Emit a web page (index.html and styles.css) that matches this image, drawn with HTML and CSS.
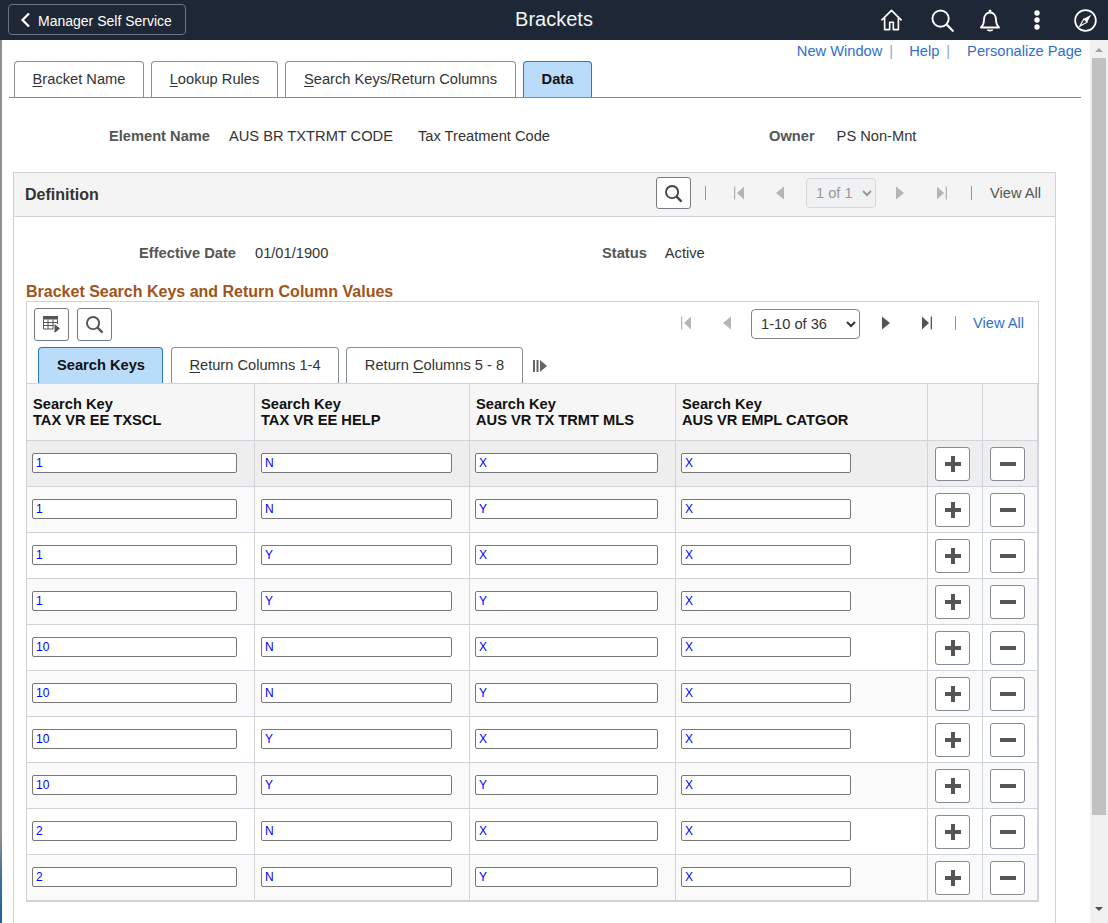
FILE: index.html
```html
<!DOCTYPE html>
<html lang="en">
<head>
<meta charset="utf-8">
<title>Brackets</title>
<link rel="stylesheet" href="styles.css">
</head>
<body>
<svg class="defs" width="0" height="0" aria-hidden="true">
  <defs>
    <symbol id="i-first" viewBox="0 0 12 16"><rect x="1" y="1.500" width="1.300" height="13"/><path d="M11 1.500v13L4 8z"/></symbol>
    <symbol id="i-prev" viewBox="0 0 10 16"><path d="M9 1.500v13L1 8z"/></symbol>
    <symbol id="i-next" viewBox="0 0 10 16"><path d="M1 1.500v13L9 8z"/></symbol>
    <symbol id="i-last" viewBox="0 0 12 16"><path d="M1 1.500v13L8 8z"/><rect x="9.700" y="1.500" width="1.300" height="13"/></symbol>
    <symbol id="i-search" viewBox="0 0 20 20"><circle cx="8.500" cy="8.500" r="6.400" fill="none" stroke="currentColor" stroke-width="2"/><path d="M13 13l5.500 5.500" stroke="currentColor" stroke-width="2.400" fill="none"/></symbol>
    <symbol id="i-plus" viewBox="0 0 16 16"><path d="M6 0h4v6h6v4h-6v6H6v-6H0V6h6z"/></symbol>
    <symbol id="i-minus" viewBox="0 0 16 4"><rect width="16" height="4"/></symbol>
  </defs>
</svg>
<header class="topbar">
  <button class="back" type="button">
    <svg class="back-icon" viewBox="0 0 10 16"><path d="M8.500 1.500L2 8l6.500 6.500" fill="none" stroke="#fff" stroke-width="2.200"/></svg>
    <span>Manager Self Service</span>
  </button>
  <h1 class="title">Brackets</h1>
  <nav class="top-icons">
    <svg class="ti ti-home" viewBox="0 0 24 24"><path d="M1 12.500L12 1.500l11 11M4.500 9.500V22.500h5.500v-8h4v8h5.500V9.500" fill="none" stroke="#fff" stroke-width="1.800" stroke-linejoin="round"/></svg>
    <svg class="ti ti-search" viewBox="0 0 24 24"><circle cx="10" cy="10" r="8.500" fill="none" stroke="#fff" stroke-width="2"/><path d="M16 16l7.500 7.500" stroke="#fff" stroke-width="2.200"/></svg>
    <svg class="ti ti-bell" viewBox="0 0 20 23"><path d="M1 18.500c2-2 3-3.500 3-7.500C4 6.500 6.500 3.500 10 3.500s6 3 6 7.500c0 4 1 5.500 3 7.500z" fill="none" stroke="#fff" stroke-width="1.800" stroke-linejoin="round"/><circle cx="10" cy="2" r="1.500" fill="#fff"/><path d="M7.500 20.500c.5 1.500 4.500 1.500 5 0" fill="none" stroke="#fff" stroke-width="1.800"/></svg>
    <svg class="ti ti-dots" viewBox="0 0 6 20"><circle cx="3" cy="3" r="2.700" fill="#fff"/><circle cx="3" cy="10" r="2.700" fill="#fff"/><circle cx="3" cy="17" r="2.700" fill="#fff"/></svg>
    <svg class="ti ti-compass" viewBox="0 0 24 24"><circle cx="12" cy="12" r="10.800" fill="none" stroke="#fff" stroke-width="1.800"/><path d="M18 6L13.700 13.700 10.300 10.300z" fill="#fff"/><path d="M6 18l4.300-7.700 3.400 3.400z" fill="none" stroke="#fff" stroke-width="1.200"/></svg>
  </nav>
</header>
<div class="shell">
  <div class="edge"></div>
  <main class="page">
    <div class="links">
      <a>New Window</a><span class="sep sep-a">|</span>
      <a>Help</a><span class="sep sep-b">|</span>
      <a>Personalize Page</a>
    </div>
    <div class="page-tabs">
      <div class="tab page-tab w1"><span><u>B</u>racket Name</span></div>
      <div class="tab page-tab w2"><span><u>L</u>ookup Rules</span></div>
      <div class="tab page-tab w3"><span><u>S</u>earch Keys/Return Columns</span></div>
      <div class="tab page-tab w4 active"><span>Data</span></div>
    </div>
    <div class="element-row">
      <span class="label l-element">Element Name</span>
      <span class="v-code">AUS BR TXTRMT CODE</span>
      <span class="v-desc">Tax Treatment Code</span>
      <span class="label">Owner</span>
      <span class="v-owner">PS Non-Mnt</span>
    </div>
    <section class="panel">
      <div class="panel-head">
        <h2 class="panel-title">Definition</h2>
        <button class="icon-btn hd-search" type="button"><svg class="ic-search"><use href="#i-search"/></svg></button>
        <span class="bar orange"></span>
        <svg class="nav dim n-first"><use href="#i-first"/></svg>
        <svg class="nav-s dim n-prev"><use href="#i-prev"/></svg>
        <select class="sel sel-off" disabled><option>1 of 1</option></select>
        <svg class="nav-s dim n-next"><use href="#i-next"/></svg>
        <svg class="nav dim n-last"><use href="#i-last"/></svg>
        <span class="bar blue-bar"></span>
        <span class="viewall-plain">View All</span>
      </div>
      <div class="date-row">
        <span class="label l-date">Effective Date</span>
        <span class="v-date">01/01/1900</span>
        <span class="label">Status</span>
        <span class="v-status">Active</span>
      </div>
      <h3 class="sub-title">Bracket Search Keys and Return Column Values</h3>
      <div class="grid-box">
        <div class="grid-tools">
          <button class="icon-btn tool" type="button">
            <svg class="ic-table" viewBox="0 0 17 17"><path d="M0 0h15v3.500H0z" fill="#555"/><path d="M.5 3.500v9.500H10M14.500 3.500V8M.5 6.500h14M.5 9.500h10M5 3.500V13M10 3.500V13" fill="none" stroke="#555"/><path d="M11.500 8l5.500 4.500-5.500 4.500z" fill="#555"/></svg>
          </button>
          <button class="icon-btn tool tool-search" type="button"><svg class="ic-search"><use href="#i-search"/></svg></button>
          <svg class="nav dim g-first"><use href="#i-first"/></svg>
          <svg class="nav-s dim g-prev"><use href="#i-prev"/></svg>
          <select class="sel sel-on"><option>1-10 of 36</option></select>
          <svg class="nav-s on g-next"><use href="#i-next"/></svg>
          <svg class="nav on g-last"><use href="#i-last"/></svg>
          <span class="bar orange g-bar"></span>
          <a class="viewall">View All</a>
        </div>
        <div class="grid-tabs">
          <div class="tab grid-tab t1 active"><span>Search Keys</span></div>
          <div class="tab grid-tab t2"><span><u>R</u>eturn Columns 1-4</span></div>
          <div class="tab grid-tab t3"><span>Return <u>C</u>olumns 5 - 8</span></div>
          <svg class="show-all" viewBox="0 0 14 12"><rect x="0" y="0" width="2" height="12"/><rect x="3.500" y="0" width="2" height="12"/><path d="M7 0l7 6-7 6z"/></svg>
        </div>
        <table class="grid">
          <colgroup><col class="c1"><col class="c2"><col class="c3"><col class="c4"><col class="c5"><col class="c6"></colgroup>
          <thead>
            <tr>
              <th>Search Key<br>TAX VR EE TXSCL</th>
              <th>Search Key<br>TAX VR EE HELP</th>
              <th>Search Key<br>AUS VR TX TRMT MLS</th>
              <th>Search Key<br>AUS VR EMPL CATGOR</th>
              <th></th><th></th>
            </tr>
          </thead>
          <tbody id="rows">
            <tr class="hover"><td><input class="in in1" value="1"></td><td><input class="in in2" value="N"></td><td><input class="in in3" value="X"></td><td><input class="in in4" value="X"></td><td><button class="rowbtn" type="button"><svg class="plus"><use href="#i-plus"/></svg></button></td><td><button class="rowbtn" type="button"><svg class="minus"><use href="#i-minus"/></svg></button></td></tr>
            <tr><td><input class="in in1" value="1"></td><td><input class="in in2" value="N"></td><td><input class="in in3" value="Y"></td><td><input class="in in4" value="X"></td><td><button class="rowbtn" type="button"><svg class="plus"><use href="#i-plus"/></svg></button></td><td><button class="rowbtn" type="button"><svg class="minus"><use href="#i-minus"/></svg></button></td></tr>
            <tr><td><input class="in in1" value="1"></td><td><input class="in in2" value="Y"></td><td><input class="in in3" value="X"></td><td><input class="in in4" value="X"></td><td><button class="rowbtn" type="button"><svg class="plus"><use href="#i-plus"/></svg></button></td><td><button class="rowbtn" type="button"><svg class="minus"><use href="#i-minus"/></svg></button></td></tr>
            <tr><td><input class="in in1" value="1"></td><td><input class="in in2" value="Y"></td><td><input class="in in3" value="Y"></td><td><input class="in in4" value="X"></td><td><button class="rowbtn" type="button"><svg class="plus"><use href="#i-plus"/></svg></button></td><td><button class="rowbtn" type="button"><svg class="minus"><use href="#i-minus"/></svg></button></td></tr>
            <tr><td><input class="in in1" value="10"></td><td><input class="in in2" value="N"></td><td><input class="in in3" value="X"></td><td><input class="in in4" value="X"></td><td><button class="rowbtn" type="button"><svg class="plus"><use href="#i-plus"/></svg></button></td><td><button class="rowbtn" type="button"><svg class="minus"><use href="#i-minus"/></svg></button></td></tr>
            <tr><td><input class="in in1" value="10"></td><td><input class="in in2" value="N"></td><td><input class="in in3" value="Y"></td><td><input class="in in4" value="X"></td><td><button class="rowbtn" type="button"><svg class="plus"><use href="#i-plus"/></svg></button></td><td><button class="rowbtn" type="button"><svg class="minus"><use href="#i-minus"/></svg></button></td></tr>
            <tr><td><input class="in in1" value="10"></td><td><input class="in in2" value="Y"></td><td><input class="in in3" value="X"></td><td><input class="in in4" value="X"></td><td><button class="rowbtn" type="button"><svg class="plus"><use href="#i-plus"/></svg></button></td><td><button class="rowbtn" type="button"><svg class="minus"><use href="#i-minus"/></svg></button></td></tr>
            <tr><td><input class="in in1" value="10"></td><td><input class="in in2" value="Y"></td><td><input class="in in3" value="Y"></td><td><input class="in in4" value="X"></td><td><button class="rowbtn" type="button"><svg class="plus"><use href="#i-plus"/></svg></button></td><td><button class="rowbtn" type="button"><svg class="minus"><use href="#i-minus"/></svg></button></td></tr>
            <tr><td><input class="in in1" value="2"></td><td><input class="in in2" value="N"></td><td><input class="in in3" value="X"></td><td><input class="in in4" value="X"></td><td><button class="rowbtn" type="button"><svg class="plus"><use href="#i-plus"/></svg></button></td><td><button class="rowbtn" type="button"><svg class="minus"><use href="#i-minus"/></svg></button></td></tr>
            <tr><td><input class="in in1" value="2"></td><td><input class="in in2" value="N"></td><td><input class="in in3" value="Y"></td><td><input class="in in4" value="X"></td><td><button class="rowbtn" type="button"><svg class="plus"><use href="#i-plus"/></svg></button></td><td><button class="rowbtn" type="button"><svg class="minus"><use href="#i-minus"/></svg></button></td></tr>
          </tbody>
        </table>
      </div>
    </section>
  </main>
  <aside class="scrollbar">
    <span class="arrow-up"></span>
    <span class="thumb"></span>
    <span class="arrow-down"></span>
  </aside>
</div>
</body>
</html>
```

FILE: styles.css
```css
* { box-sizing: border-box; }
html, body { margin: 0; height: 100%; }
body {
  height: 923px;
  overflow: hidden;
  background: #fff;
  color: #333;
  font: 11pt/18px "Liberation Sans", Arial, sans-serif;
  display: flex;
  flex-direction: column;
}
.defs { position: absolute; }
button { padding: 0; font: inherit; cursor: pointer; }
a { color: #2f6fce; }
u { text-underline-offset: 2px; }

/* top bar */
.topbar {
  flex: 0 0 40px;
  background: #1d2735;
  display: flex;
  align-items: center;
  padding: 0 0 0 8px;
  position: relative;
}
.back {
  width: 178px;
  height: 31px;
  margin-top: -1px;
  background: #1d2735;
  border: 1px solid #6b7582;
  border-radius: 4px;
  color: #fff;
  display: flex;
  align-items: center;
  padding: 2px 0 0 11px;
  gap: 7px;
  font-size: 14px;
}
.back-icon { width: 11px; height: 16px; margin-top: -2px; }
.title {
  position: absolute;
  left: 0;
  right: 0;
  top: 8px;
  margin: 0;
  text-align: center;
  font-size: 20px;
  line-height: 22px;
  font-weight: 400;
  color: #f2f4f6;
}
.top-icons { margin-left: auto; display: flex; align-items: center; height: 40px; }
.ti { display: block; }
.ti-home { width: 23px; height: 22px; margin-right: 28px; }
.ti-search { width: 23px; height: 23px; margin-right: 26px; }
.ti-bell { width: 20px; height: 23px; margin-right: 34px; }
.ti-dots { width: 6px; height: 20px; margin: 0 34px 1px 0; }
.ti-compass { width: 23px; height: 23px; margin-right: 11px; }

/* frame */
.shell { flex: 1; display: flex; min-height: 0; }
.edge { flex: 0 0 2px; background: linear-gradient(#8f8f8f 0 90%, #3b6ea5 95%, #1f5f9e); }
.page { flex: 1; min-width: 0; overflow: hidden; }
.scrollbar {
  flex: 0 0 18px;
  background: #f1f1f1;
  display: flex;
  flex-direction: column;
  align-items: center;
}
.arrow-up, .arrow-down { display: block; width: 0; height: 0; border-left: 4px solid transparent; border-right: 4px solid transparent; }
.arrow-up { border-bottom: 4px solid #a3a3a3; margin-top: 8px; }
.thumb { display: block; width: 14px; height: 757px; background: #c1c1c1; margin-top: 6px; }
.arrow-down { border-top: 4px solid #505050; margin-top: 92px; }

/* links */
.links {
  height: 21px;
  display: flex;
  justify-content: flex-end;
  align-items: center;
  padding-right: 8px;
}
.sep { color: #8da9c9; }
.sep-a { margin: 0 16px 0 7px; }
.sep-b { margin: 0 17px 0 7px; }

/* tabs */
.tab {
  display: flex;
  align-items: center;
  justify-content: center;
  padding-bottom: 2px;
  background: #fff;
  border: 1px solid #8b9096;
  border-bottom: 0;
  border-radius: 4px 4px 0 0;
  color: #333;
  white-space: nowrap;
}
.tab.active { background: #b9dcfb; border-color: #2b77c0; color: #111; font-weight: 700; }
.page-tabs {
  margin-left: 7px;
  width: 1072px;
  height: 37px;
  padding-left: 5px;
  display: flex;
  gap: 7px;
  border-bottom: 1px solid #8b8b8b;
}
.w1 { width: 130px; }
.w2 { width: 127px; }
.w3 { width: 231px; }
.w4 { width: 69px; }

/* summary rows */
.label { font-weight: 700; color: #555; }
.element-row {
  display: flex;
  align-items: center;
  height: 74px;
  padding-top: 1px;
}
.l-element { width: 208px; text-align: right; margin-right: 19px; }
.v-code { width: 189px; }
.v-desc { width: 351px; }
.v-owner { margin-left: 22px; }

.panel {
  margin-left: 11px;
  width: 1043px;
  height: 800px;
  border: 1px solid #d0d3d8;
  border-bottom: 0;
}
.panel-head {
  height: 44px;
  padding-bottom: 3px;
  background: #f4f4f4;
  border-bottom: 1px solid #d0d3d8;
  display: flex;
  align-items: center;
}
.panel-title { margin: 3px 0 0 11px; width: 631px; font-size: 16px; font-weight: 700; color: #333; }
.icon-btn {
  background: #fff;
  border: 1px solid #777c82;
  border-radius: 3px;
  color: #555;
  display: flex;
  align-items: center;
  justify-content: center;
}
.hd-search { width: 35px; height: 32px; color: #444; }
.ic-search { width: 19px; height: 19px; }
.bar { flex: none; width: 1px; height: 14px; }
.orange { background: #e08040; margin-left: 14px; }
.blue-bar { background: #7f9cc0; margin-left: 23px; }
.nav { width: 12px; height: 16px; }
.nav-s { width: 10px; height: 16px; }
.dim { fill: #b5b5b5; }
.on { fill: #555; }
.n-first { margin-left: 27px; }
.n-prev { margin-left: 30px; }
.sel-off { margin-left: 21px; }
.n-next { margin-left: 19px; }
.n-last { margin-left: 31px; }
.viewall-plain { margin-left: 18px; color: #555; }
.sel {
  font: 11pt "Liberation Sans", Arial, sans-serif;
  border-radius: 4px;
  padding-left: 5px;
}
.sel-off { width: 70px; height: 30px; background: #f0f1f2; color: #999; border: 1px solid #d5d7da; opacity: 1; }
.sel-on { width: 109px; height: 30px; background: #fff; color: #333; border: 1px solid #80868c; margin-left: 19px; }

.date-row {
  display: flex;
  align-items: center;
  height: 72px;
  padding-bottom: 1px;
}
.l-date { width: 222px; text-align: right; margin-right: 19px; }
.v-date { width: 347px; }
.v-status { margin-left: 18px; }

.sub-title {
  margin: 0 0 0 12px;
  height: 12px;
  line-height: 5px;
  font-size: 16px;
  font-weight: 700;
  color: #a0541a;
}

/* grid */
.grid-box {
  margin-left: 12px;
  width: 1013px;
  border: 1px solid #d0d3d8;
  border-bottom: 0;
}
.grid-tools {
  height: 45px;
  padding: 6px 0 0 7px;
  display: flex;
  align-items: flex-start;
}
.tool { width: 35px; height: 33px; }
.tool-search { margin-left: 8px; }
.ic-table { width: 17px; height: 17px; }
.grid-tools .nav, .grid-tools .nav-s { margin-top: 7px; }
.grid-tools .sel-on { margin-top: 1px; }
.g-first { margin-left: 568px; }
.g-prev { margin-left: 30px; }
.g-next { margin-left: 21px; }
.g-last { margin-left: 30px; }
.g-bar { margin: 8px 0 0 22px; }
.viewall { margin: 6px 0 0 17px; }

.grid-tabs {
  height: 36px;
  padding-left: 11px;
  display: flex;
  align-items: stretch;
}
.t1 { width: 125px; padding-left: 1px; }
.t2 { width: 168px; margin-left: 8px; }
.t3 { width: 177px; margin-left: 7px; }
.show-all { width: 14px; height: 12px; margin: 13px 0 0 10px; fill: #666; }

.grid {
  border-collapse: separate;
  border-spacing: 0;
  table-layout: fixed;
  width: 1011px;
}
.c1 { width: 228px; }
.c2 { width: 215px; }
.c3 { width: 206px; }
.c4 { width: 252px; }
.c5 { width: 55px; }
.c6 { width: 55px; }
.grid th {
  height: 58px;
  padding: 12px 0 0 6px;
  vertical-align: top;
  text-align: left;
  font-size: 11pt;
  line-height: 16px;
  font-weight: 700;
  color: #111;
  background: #f6f6f6;
  border-top: 1px solid #d0d5dc;
  border-right: 1px solid #d0d5dc;
  border-bottom: 1px solid #d0d5dc;
}
.grid td {
  height: 46px;
  padding: 12px 0 0 5px;
  vertical-align: top;
  border-right: 1px solid #d0d5dc;
  border-bottom: 1px solid #d0d5dc;
  background: #fff;
}
.grid tbody tr:last-child td { height: 47px; border-bottom: 2px solid #cfd3d8; }
.grid tbody tr:nth-child(even) td { background: #fafafa; }
.grid tbody tr.hover td { background: #eee; }
.in {
  display: block;
  height: 20px;
  padding: 0 3px;
  font: 12px "Liberation Sans", Arial, sans-serif;
  color: #00f;
  background: #fff;
  border: 1px solid #777;
  border-radius: 2px;
}
.in1 { width: 205px; }
.in2 { width: 191px; margin-left: 1px; }
.in3 { width: 183px; }
.in4 { width: 170px; }
.grid td:nth-child(5), .grid td:nth-child(6) { padding: 6px 0 0 7px; }
.rowbtn {
  display: flex;
  align-items: center;
  justify-content: center;
  width: 35px;
  height: 34px;
  background: #fff;
  border: 1px solid #858b91;
  border-radius: 3px;
}
.plus { width: 16px; height: 16px; fill: #555; }
.minus { width: 16px; height: 4px; fill: #555; }
```
